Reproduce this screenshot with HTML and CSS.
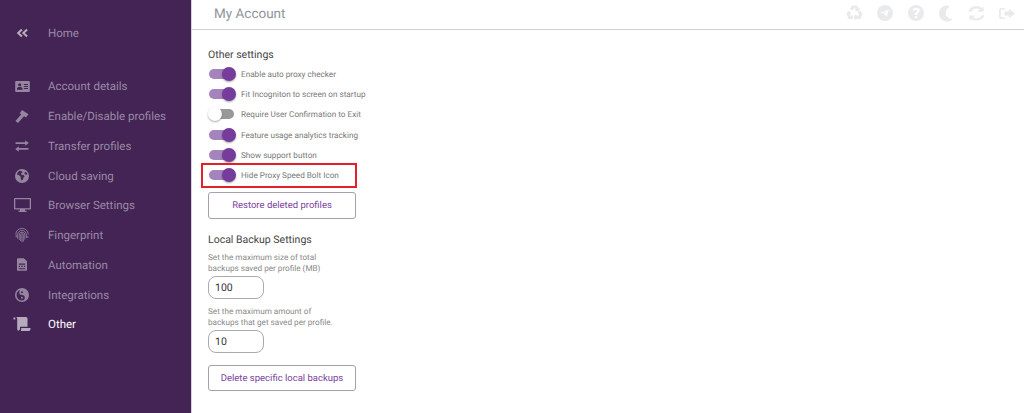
FILE: index.html
```html
<!DOCTYPE html>
<html lang="en">
<head>
<meta charset="utf-8">
<title>My Account</title>
<link rel="stylesheet" href="styles.css">
</head>
<body>
<div class="app">
  <aside class="sidebar">
    <a class="nav-item home"><span class="nav-icon"><svg width="12" height="10" viewBox="0 0 13 10"><path d="M5.600 0.300 0.800 5l4.800 4.700 1.600-1.600L4 5l3.200-3.100zM11.200 0.300 6.400 5l4.800 4.700 1.600-1.600L9.600 5l3.200-3.100z"/></svg></span><span>Home</span></a>
    <nav class="nav-list">
      <a class="nav-item"><span class="nav-icon"><svg width="15" height="11" viewBox="0 0 16 12"><path fill-rule="evenodd" d="M1 0h14a1 1 0 0 1 1 1v10a1 1 0 0 1-1 1H1a1 1 0 0 1-1-1V1a1 1 0 0 1 1-1zM5 2.400a1.700 1.700 0 1 0 0 3.400 1.700 1.700 0 0 0 0-3.400zM2 9.600h6V8.400C8 7.200 7 6.500 5 6.500S2 7.200 2 8.400zM9.500 3.200v1.200H14V3.200zM9.500 5.400v1.200H14V5.400zM9.500 7.600v1.200H14V7.600z"/></svg></span><span>Account details</span></a>
      <a class="nav-item"><span class="nav-icon"><svg width="14" height="13" viewBox="0 0 15 14"><path d="M7.500 0 14.500 4.600 11.800 8 9.700 6.600 3.200 14 .5 11.900 6.700 4.700 5.100 3.400z"/></svg></span><span>Enable/Disable profiles</span></a>
      <a class="nav-item"><span class="nav-icon"><svg width="14" height="12" viewBox="0 0 15 13"><path d="M11 0.300 14.800 3.300 11 6.200V4.300H.5V2.400H11zM4 6.800V8.700H14.500V10.600H4V12.700L.2 9.700z"/></svg></span><span>Transfer profiles</span></a>
      <a class="nav-item"><span class="nav-icon"><svg width="14" height="14" viewBox="0 0 14 14"><path fill-rule="evenodd" d="M7 0a7 7 0 1 1 0 14A7 7 0 0 1 7 0zM4.500 1.800 2.600 3.400 2 5.600l1.800.5 1.700 1.500.3 1.900.9 2.300 1.200-1.200.5-1.900 1.300-1.500-1.300-1.200-2-.3-.7-.9 1.200-.8.600-1.300-1.700-.8zM10.300 2.700 9.300 4.300l1.400 1.500 1.700-.3-.7-1.700z"/></svg></span><span>Cloud saving</span></a>
      <a class="nav-item"><span class="nav-icon"><svg width="17" height="14" viewBox="0 0 17 14"><path fill-rule="evenodd" d="M1 0h15a1 1 0 0 1 1 1v9.500a1 1 0 0 1-1 1h-5v1.300h1.500V14h-8v-1.200H6v-1.300H1a1 1 0 0 1-1-1V1a1 1 0 0 1 1-1zM1.300 1.300v8.900h14.400V1.300z"/></svg></span><span>Browser Settings</span></a>
      <a class="nav-item"><span class="nav-icon"><svg width="14" height="14" viewBox="0 0 14 14" class="stroke"><path d="M.8 6.500a6.200 6.200 0 0 1 12.400 0M1.200 9.500V7a5.800 5.800 0 0 1 0-.5M2.600 10.500V6.800a4.400 4.400 0 0 1 8.800 0V10M4.200 12V7a2.800 2.800 0 0 1 5.600 0v4.500M5.700 13V7a1.300 1.300 0 0 1 2.600 0v6.500M7 14V7M12.900 8v2"/></svg></span><span>Fingerprint</span></a>
      <a class="nav-item"><span class="nav-icon"><svg width="10" height="13" viewBox="0 0 11 14"><path fill-rule="evenodd" d="M1 0h6.500L11 3.500V13a1 1 0 0 1-1 1H1a1 1 0 0 1-1-1V1a1 1 0 0 1 1-1zM2 6v1.300h7V6zM2 8.500v1.300h1.500V8.500zM4.700 8.500v1.300h1.600V8.500zM7.500 8.500v1.300H9V8.500zM2 11v1.300h7V11z"/></svg></span><span>Automation</span></a>
      <a class="nav-item"><span class="nav-icon"><svg width="14" height="14" viewBox="0 0 14 14"><path fill-rule="evenodd" d="M7 0a7 7 0 1 1 0 14A7 7 0 0 1 7 0zM7 1.500A5.500 5.500 0 0 0 7 12.500 2.750 2.750 0 0 0 7 7 2.750 2.750 0 0 1 7 1.500zM7 3.300a1 1 0 1 1 0 2 1 1 0 0 1 0-2zM7 8.700a1 1 0 1 0 0 2 1 1 0 0 0 0-2z"/></svg></span><span>Integrations</span></a>
      <a class="nav-item active"><span class="nav-icon"><svg width="18" height="14" viewBox="0 0 17 14"><path d="M0 .5h1.800v2H0zM3 0h9.500a1.500 1.500 0 0 1 1.500 1.500V9.800H6.500V12a2 2 0 0 1-1.500 1.700c-1-.4-1.300-1-1.300-2V2zM7.700 11h9.300v1.300a1.700 1.700 0 0 1-1.700 1.700H7.200c.4-.6.500-1.300.5-3z"/></svg></span><span>Other</span></a>
    </nav>
  </aside>
  <div class="content">
    <header class="topbar">
      <h1 class="title">My Account</h1>
      <div class="top-icons">
        <span class="top-icon"><svg width="17" height="16" viewBox="0 0 17 16"><path d="M6 .5h5l1.800 3 1.500-.8-1.700 3.800-4-.3 1.400-.8L8.500 2.500 6.600 5.600 3.800 4zM.5 9l2-3.300 2.800 1.700-1.900 3.100h3.400V14H2.500zM16.500 9l-2-3.400-2.800 1.600 1.600 3.200H10v-1.500l-2.700 3.400L10 15.500V14h4.500z"/></svg></span>
        <span class="top-icon"><svg width="16" height="16" viewBox="0 0 17 17"><path fill-rule="evenodd" d="M8.500 0a8.500 8.500 0 1 1 0 17 8.500 8.500 0 0 1 0-17zM12.700 4.700 3.400 8.300l2.300.8 5-3.200-3.600 3.700 3.400 2.500z"/></svg></span>
        <span class="top-icon"><svg width="16" height="16" viewBox="0 0 17 17"><path fill-rule="evenodd" d="M8.500 0a8.500 8.500 0 1 1 0 17 8.500 8.500 0 0 1 0-17zM7.300 11.800v2.400h2.400v-2.400zM8.600 2.900c-2 0-3.300 1-3.700 2.600l2 .8c.2-.8.800-1.300 1.600-1.300.8 0 1.300.4 1.300 1 0 1.300-2.500 1.500-2.500 4.600h2.400c0-1.900 2.700-2.300 2.700-4.800 0-1.900-1.700-2.900-3.800-2.900z"/></svg></span>
        <span class="top-icon"><svg width="14" height="17" viewBox="0 0 15 17"><path d="M8.500 0C3.800 0 0 3.800 0 8.500S3.800 17 8.500 17c2.600 0 4.800-1.100 6.400-2.900-4 .6-7.600-2.100-7.600-5.700 0-2.900 1.500-5.500 4-7.100C10.500.5 9.500 0 8.500 0z"/></svg></span>
        <span class="top-icon"><svg width="17" height="15" viewBox="0 0 16 16" preserveAspectRatio="none"><path d="M8 0c2 0 3.800.8 5 2.100L14.700.4V6H9.100l2-2A5 5 0 0 0 3 6.200H.4A8 8 0 0 1 8 0zM1.300 10h5.600l-2 2A5 5 0 0 0 13 9.800h2.600A8 8 0 0 1 3 13.900L1.300 15.600z"/></svg></span>
        <span class="top-icon"><svg width="16" height="11" viewBox="0 0 16 13" preserveAspectRatio="none"><path d="M3 0h3v1.800H3.200c-.8 0-1.400.6-1.400 1.400v6.600c0 .8.600 1.400 1.400 1.400H6V13H3a3 3 0 0 1-3-3V3a3 3 0 0 1 3-3zM10 .8 16 6.500 10 12.200V8.900H5.500V4.100H10z"/></svg></span>
      </div>
    </header>
    <main class="main">
      <section class="settings">
        <h2 class="section-title">Other settings</h2>
        <ul class="toggles">
          <li class="toggle-row"><span class="switch on"></span><span>Enable auto proxy checker</span></li>
          <li class="toggle-row"><span class="switch on"></span><span>Fit Incogniton to screen on startup</span></li>
          <li class="toggle-row"><span class="switch"></span><span>Require User Confirmation to Exit</span></li>
          <li class="toggle-row"><span class="switch on"></span><span>Feature usage analytics tracking</span></li>
          <li class="toggle-row"><span class="switch on"></span><span>Show support button</span></li>
          <li class="toggle-row highlighted"><span class="switch on"></span><span>Hide Proxy Speed Bolt Icon</span></li>
        </ul>
        <button class="outline-btn restore">Restore deleted profiles</button>
      </section>
      <section class="backup">
        <h2 class="section-title">Local Backup Settings</h2>
        <label class="field-label" for="size">Set the maximum size of total<br>backups saved per profile (MB)</label>
        <input id="size" class="num-input" value="100">
        <label class="field-label second" for="amount">Set the maximum amount of<br>backups that get saved per profile.</label>
        <input id="amount" class="num-input" value="10">
        <button class="outline-btn delete">Delete specific local backups</button>
      </section>
    </main>
  </div>
</div>
</body>
</html>
```

FILE: styles.css
```css
*, *::before, *::after { box-sizing: border-box; }
html, body { margin: 0; padding: 0; height: 100%; overflow: hidden; background: #fff; }
body { font-family: Roboto, "Liberation Sans", sans-serif; text-rendering: geometricPrecision; }
.app { display: flex; width: 1024px; height: 413px; }
.sidebar { width: 192px; flex: none; background: #432454; border-right: 1px solid #d9d0e2; padding-top: 18.5px; }
.nav-item { display: flex; align-items: center; height: 29.75px; color: #9b8aa6; font-size: 11.5px; }
.nav-item.home { height: 29px; }
.nav-list { margin-top: 24px; }
.nav-item.active { color: #fff; }
.nav-icon { width: 48px; flex: none; display: flex; justify-content: center; padding-right: 4px; }
.nav-icon svg { fill: #95859f; }
.nav-icon svg.stroke { fill: none; stroke: #95859f; stroke-width: .85; }
.home .nav-icon svg { fill: #b5abbc; }
.nav-item.active .nav-icon svg { fill: #b5abbc; }
.content { flex: 1; display: flex; flex-direction: column; min-width: 0; }
.topbar { height: 30px; flex: none; border-bottom: 1px solid #cfcfd6; display: flex; align-items: center; justify-content: space-between; padding: 0 1.75px 1px 22px; }
.title { margin: 0; font-size: 13.5px; font-weight: 400; color: #8f9499; }
.top-icons { display: flex; align-items: center; margin-bottom: 2px; }
.top-icon { width: 30.5px; display: flex; justify-content: center; }
.top-icon svg { fill: #e8eaec; }
.main { padding: 18px 0 0 16px; width: 170px; }
.section-title { margin: 0; font-size: 10.5px; line-height: 13px; font-weight: 400; color: #444; }
.toggles { list-style: none; margin: 3px 0 0; padding: 0; }
.toggle-row { position: relative; display: flex; align-items: center; gap: 7px; height: 20.2px; font-size: 8.16px; color: #777; white-space: nowrap; }
.switch { position: relative; width: 25px; height: 10px; margin-left: 1px; border-radius: 5px; background: #999; flex: none; }
.switch::after { content: ""; position: absolute; left: -1.5px; top: -2px; width: 14px; height: 14px; border-radius: 50%; background: #fff; box-shadow: 0 1px 2px rgba(0,0,0,.35); }
.switch.on { background: #a583bd; }
.switch.on::after { left: 13px; background: #763c9b; }
.highlighted::after { content: ""; position: absolute; left: -7px; top: -1.5px; width: 156px; height: 25px; border: 2px solid #e3202a; }
.outline-btn { display: block; width: 148px; height: 27px; padding: 0; background: #fff; border: 1px solid #a79fb0; border-radius: 3px; font: 400 9.5px Roboto, sans-serif; color: #7b3f9e; text-rendering: geometricPrecision; }
.restore { margin-top: 7px; }
.backup { margin-top: 14px; }
.field-label { display: block; margin-top: 5.5px; font-size: 8.16px; line-height: 11px; color: #888; }
.field-label.second { margin-top: 7px; }
.num-input { display: block; width: 56px; height: 23px; margin-top: 2px; padding: 0 6px; border: 1px solid #aaa; border-radius: 8px; font: 400 10.5px Roboto, sans-serif; color: #333; background: #fff; text-rendering: geometricPrecision; }
.delete { margin-top: 12.5px; height: 26px; }
```
